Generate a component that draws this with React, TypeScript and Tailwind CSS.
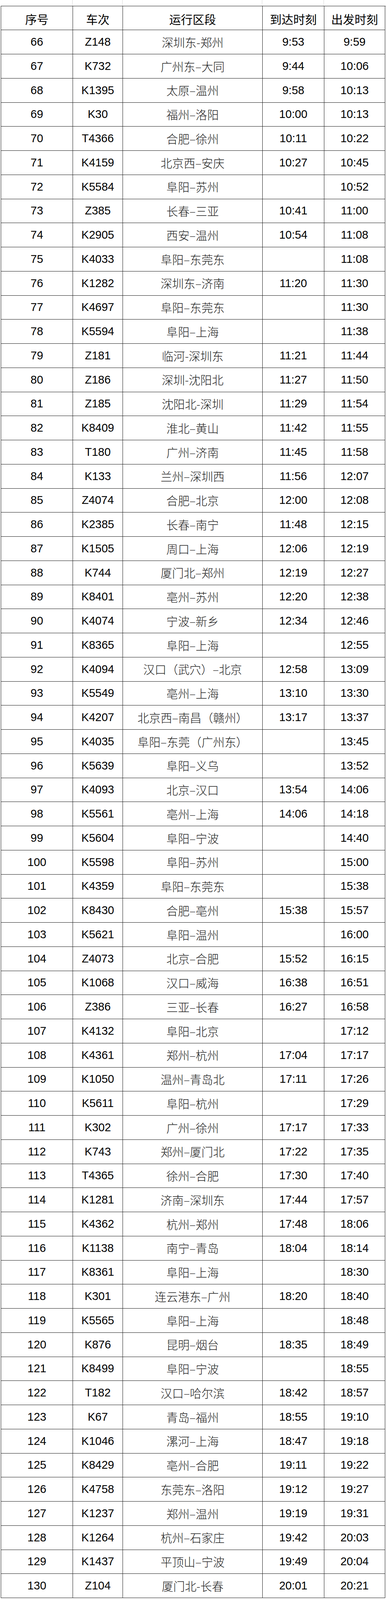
import React from 'react';

type Row = [number, string, string, string, string];

const rows: Row[] = [
  [66, 'Z148', '深圳东-郑州', '9:53', '9:59'],
  [67, 'K732', '广州东–大同', '9:44', '10:06'],
  [68, 'K1395', '太原–温州', '9:58', '10:13'],
  [69, 'K30', '福州–洛阳', '10:00', '10:13'],
  [70, 'T4366', '合肥–徐州', '10:11', '10:22'],
  [71, 'K4159', '北京西–安庆', '10:27', '10:45'],
  [72, 'K5584', '阜阳–苏州', '', '10:52'],
  [73, 'Z385', '长春–三亚', '10:41', '11:00'],
  [74, 'K2905', '西安–温州', '10:54', '11:08'],
  [75, 'K4033', '阜阳–东莞东', '', '11:08'],
  [76, 'K1282', '深圳东–济南', '11:20', '11:30'],
  [77, 'K4697', '阜阳–东莞东', '', '11:30'],
  [78, 'K5594', '阜阳–上海', '', '11:38'],
  [79, 'Z181', '临河-深圳东', '11:21', '11:44'],
  [80, 'Z186', '深圳-沈阳北', '11:27', '11:50'],
  [81, 'Z185', '沈阳北-深圳', '11:29', '11:54'],
  [82, 'K8409', '淮北–黄山', '11:42', '11:55'],
  [83, 'T180', '广州–济南', '11:45', '11:58'],
  [84, 'K133', '兰州–深圳西', '11:56', '12:07'],
  [85, 'Z4074', '合肥–北京', '12:00', '12:08'],
  [86, 'K2385', '长春–南宁', '11:48', '12:15'],
  [87, 'K1505', '周口–上海', '12:06', '12:19'],
  [88, 'K744', '厦门北–郑州', '12:19', '12:27'],
  [89, 'K8401', '亳州–苏州', '12:20', '12:38'],
  [90, 'K4074', '宁波–新乡', '12:34', '12:46'],
  [91, 'K8365', '阜阳–上海', '', '12:55'],
  [92, 'K4094', '汉口（武穴）–北京', '12:58', '13:09'],
  [93, 'K5549', '亳州–上海', '13:10', '13:30'],
  [94, 'K4207', '北京西–南昌（赣州）', '13:17', '13:37'],
  [95, 'K4035', '阜阳–东莞（广州东）', '', '13:45'],
  [96, 'K5639', '阜阳–义乌', '', '13:52'],
  [97, 'K4093', '北京–汉口', '13:54', '14:06'],
  [98, 'K5561', '亳州–上海', '14:06', '14:18'],
  [99, 'K5604', '阜阳–宁波', '', '14:40'],
  [100, 'K5598', '阜阳–苏州', '', '15:00'],
  [101, 'K4359', '阜阳–东莞东', '', '15:38'],
  [102, 'K8430', '合肥–亳州', '15:38', '15:57'],
  [103, 'K5621', '阜阳–温州', '', '16:00'],
  [104, 'Z4073', '北京–合肥', '15:52', '16:15'],
  [105, 'K1068', '汉口–威海', '16:38', '16:51'],
  [106, 'Z386', '三亚–长春', '16:27', '16:58'],
  [107, 'K4132', '阜阳–北京', '', '17:12'],
  [108, 'K4361', '郑州–杭州', '17:04', '17:17'],
  [109, 'K1050', '温州–青岛北', '17:11', '17:26'],
  [110, 'K5611', '阜阳–杭州', '', '17:29'],
  [111, 'K302', '广州–徐州', '17:17', '17:33'],
  [112, 'K743', '郑州–厦门北', '17:22', '17:35'],
  [113, 'T4365', '徐州–合肥', '17:30', '17:40'],
  [114, 'K1281', '济南–深圳东', '17:44', '17:57'],
  [115, 'K4362', '杭州–郑州', '17:48', '18:06'],
  [116, 'K1138', '南宁–青岛', '18:04', '18:14'],
  [117, 'K8361', '阜阳–上海', '', '18:30'],
  [118, 'K301', '连云港东–广州', '18:20', '18:40'],
  [119, 'K5565', '阜阳–上海', '', '18:48'],
  [120, 'K876', '昆明–烟台', '18:35', '18:49'],
  [121, 'K8499', '阜阳–宁波', '', '18:55'],
  [122, 'T182', '汉口–哈尔滨', '18:42', '18:57'],
  [123, 'K67', '青岛–福州', '18:55', '19:10'],
  [124, 'K1046', '漯河–上海', '18:47', '19:18'],
  [125, 'K8429', '亳州–合肥', '19:11', '19:22'],
  [126, 'K4758', '东莞东–洛阳', '19:12', '19:27'],
  [127, 'K1237', '郑州–温州', '19:19', '19:31'],
  [128, 'K1264', '杭州–石家庄', '19:42', '20:03'],
  [129, 'K1437', '平顶山–宁波', '19:49', '20:04'],
  [130, 'Z104', '厦门北-长春', '20:01', '20:21'],
];

// widths in vw (989px sheet), heights in vh (4775px sheet) so the whole sheet fits the window
const cols = 'grid-cols-[18.605vw_12.942vw_36.198vw_15.976vw_15.774vw]';
const cell =
  'flex h-[1.5079vh] items-center justify-center overflow-hidden whitespace-nowrap leading-none border-r-[0.2022vw] border-b-[0.042vh] border-[#1c1c1c]';
const num = "font-['Liberation_Sans',sans-serif] text-[2.932vw] text-black";
const cjk = "font-['Noto_Sans_CJK_SC',sans-serif]";
const head = `${cell} ${cjk} pt-[0.084vh] text-[3.033vw] text-black`;

const App: React.FC = () => {
  return (
    <div className="h-screen w-full overflow-hidden bg-white">
      {/* tail of the previous row */}
      <div className={`ml-[0.2022vw] grid h-[0.356vh] ${cols}`}>
        <div className="border-r-[0.2022vw] border-[#d6d6d6]" />
        <div className="border-r-[0.2022vw] border-[#d6d6d6]" />
        <div className="border-r-[0.2022vw] border-[#d6d6d6]" />
        <div className="border-r-[0.2022vw] border-[#d6d6d6]" />
        <div />
      </div>

      <div
        className={`ml-[0.2022vw] grid w-[99.697vw] ${cols} auto-rows-[1.5079vh] border-l-[0.2022vw] border-t-[0.042vh] border-[#1c1c1c]`}
      >
        <div className={head}>序号</div>
        <div className={head}>车次</div>
        <div className={head}>运行区段</div>
        <div className={head}>到达时刻</div>
        <div className={head}>出发时刻</div>

        {rows.map(([no, train, route, arrive, depart]) => (
          <React.Fragment key={no}>
            <div className={`${cell} ${num}`}>{no}</div>
            <div className={`${cell} ${num}`}>{train}</div>
            <div className={`${cell} ${cjk} text-[3vw] font-light text-[#222]`}>{route}</div>
            <div className={`${cell} ${num}`}>{arrive}</div>
            <div className={`${cell} ${num}`}>{depart}</div>
          </React.Fragment>
        ))}
      </div>
    </div>
  );
};

export default App;
